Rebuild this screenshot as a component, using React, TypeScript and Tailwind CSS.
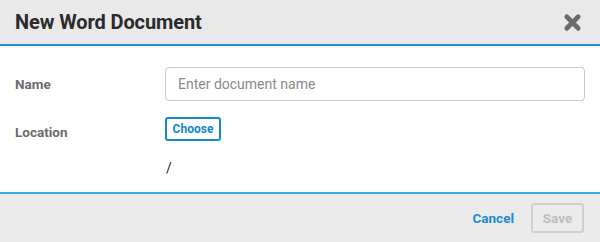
import React from 'react';

const NewDocumentDialog: React.FC = () => {
  return (
    <div className="w-[600px] h-[242px] bg-white flex flex-col overflow-hidden" style={{ fontFamily: 'Roboto, "Liberation Sans", sans-serif' }}>
      <div className="h-[46px] shrink-0 bg-[#e9e9e9] flex items-center justify-between pl-[15px] pr-[18px] border-b-2 border-[#1f8fd6]">
        <h1 className="text-[20px] font-bold text-[#2b2b2b] tracking-[-0.1px]">New Word Document</h1>
        <svg width="19" height="19" viewBox="0 0 20 20">
          <path d="M4 4 L16 16 M16 4 L4 16" stroke="#6b6b6b" strokeWidth="5" strokeLinecap="round" />
        </svg>
      </div>

      <div className="flex-1 px-[15px] pt-[21px]">
        <div className="flex items-center h-[34px]">
          <span className="w-[150px] text-[13.5px] font-bold text-[#6b6b6b]">Name</span>
          <input
            className="flex-1 h-[34px] border border-[#c8c8c8] rounded-[4px] px-[12px] text-[14px] text-[#333] placeholder:text-[#8a8a8a] outline-none"
            placeholder="Enter document name"
          />
        </div>
        <div className="flex mt-[16px]">
          <span className="w-[150px] text-[13.5px] font-bold text-[#6b6b6b] pt-[5px]">Location</span>
          <div className="flex flex-col">
            <button className="w-[56px] h-[24px] border-2 border-[#1487d0] rounded-[3px] text-[12px] font-bold text-[#1487d0] bg-white leading-none">
              Choose
            </button>
            <span className="text-[14px] text-[#222] mt-[20px] pl-[1px] leading-none">/</span>
          </div>
        </div>
      </div>

      <div className="h-[50px] shrink-0 bg-[#ebebeb] border-t-2 border-[#36a9e3] flex items-center justify-end pr-[16px] gap-[17px]">
        <button className="text-[13.5px] font-bold text-[#1c8ad6]">Cancel</button>
        <button className="w-[53px] h-[30px] border-2 border-[#cfcfcf] rounded-[3px] text-[13.5px] font-bold text-[#bdbdbd]">
          Save
        </button>
      </div>
    </div>
  );
};

export default function App() {
  return <NewDocumentDialog />;
}
